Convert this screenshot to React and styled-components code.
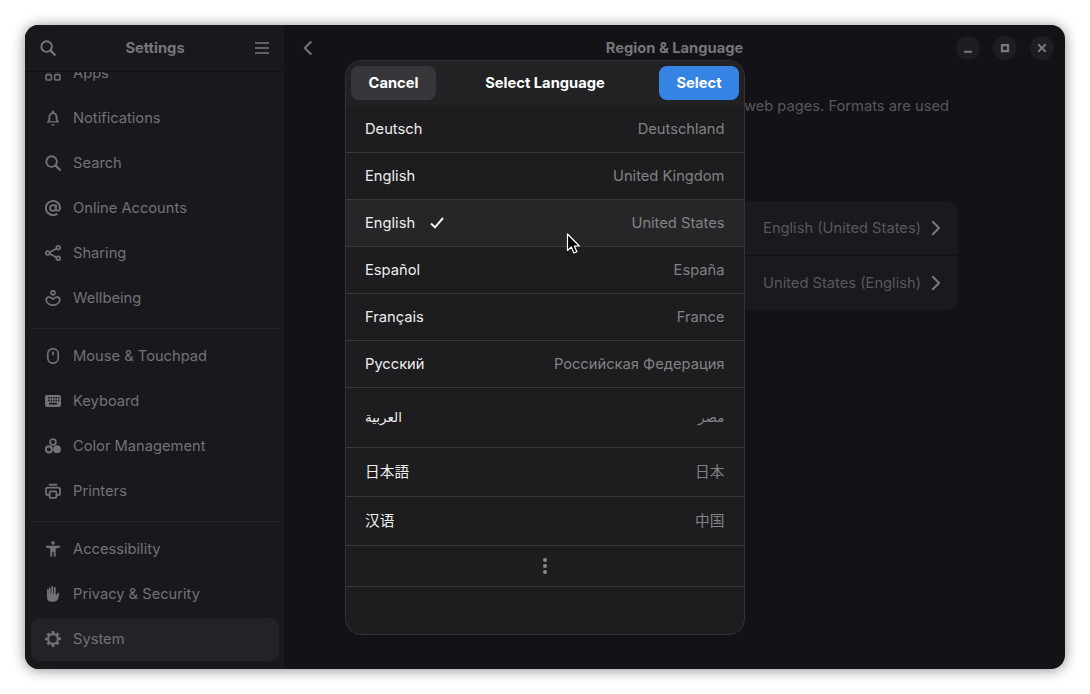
import React from "react";
import styled, { createGlobalStyle } from "styled-components";

const GlobalStyle = createGlobalStyle`
  html, body {
    margin: 0;
    padding: 0;
    background: #ffffff;
  }
  body {
    font-family: Inter, "Noto Sans CJK JP", "DejaVu Sans", sans-serif;
    font-size: 14.7px;
  }
`;

const Page = styled.div`
  width: 1090px;
  height: 694px;
  padding: 25px;
  box-sizing: border-box;
`;

const Window = styled.div`
  position: relative;
  width: 1040px;
  height: 644px;
  display: flex;
  border-radius: 14px;
  overflow: hidden;
  background: #121217;
  box-shadow: 0 1px 14px rgba(0, 0, 0, 0.45);
`;

const Sidebar = styled.aside`
  width: 259px;
  flex: none;
  display: flex;
  flex-direction: column;
  background: #19191d;
`;

const SideHeader = styled.header`
  height: 46px;
  flex: none;
  display: flex;
  align-items: center;
  justify-content: space-between;
  padding: 0 14px 0 15px;
  background: #19191d;
  border-bottom: 1px solid #111115;
  color: #78787b;
  position: relative;
  z-index: 1;
`;

const HeaderTitle = styled.div`
  font-weight: 700;
  padding-bottom: 1px;
  color: #767679;
`;

const SideList = styled.nav`
  flex: 1;
  min-height: 0;
  overflow: hidden;
  display: flex;
  flex-direction: column;
  justify-content: flex-end;
  gap: 2px;
  padding: 0 5px 8px 6px;
`;

const SideItem = styled.div`
  height: 43px;
  box-sizing: border-box;
  flex: none;
  display: flex;
  align-items: center;
  gap: 12px;
  padding: 0 14px 2px;
  border-radius: 9px;
  color: #727275;
  background: ${(p) => (p.$active ? "#232327" : "transparent")};
`;

const SideRule = styled.div`
  height: 1px;
  flex: none;
  background: #26262a;
  margin: 6px 0 4px;
`;

const Main = styled.main`
  flex: 1;
  min-width: 0;
  display: flex;
  flex-direction: column;
`;

const MainHeader = styled.header`
  height: 46px;
  flex: none;
  display: grid;
  grid-template-columns: 1fr auto 1fr;
  align-items: center;
  padding: 0 11px;
  color: #767679;
`;

const BackSlot = styled.div`
  display: flex;
  padding-left: 5px;
`;

const WindowButtons = styled.div`
  display: flex;
  justify-content: flex-end;
  gap: 13px;
`;

const RoundButton = styled.div`
  width: 24px;
  height: 24px;
  border-radius: 50%;
  background: #1e1e22;
  color: #78787b;
  display: flex;
  align-items: center;
  justify-content: center;
`;

const Content = styled.div`
  width: 567px;
  margin: 0 auto;
  padding-top: 25px;
`;

const Intro = styled.p`
  margin: 0 0 63px;
  color: #58585b;
  line-height: 21px;
`;

const Card = styled.div`
  background: #1a1a1e;
  border-radius: 12px;
`;

const CardRow = styled.div`
  height: 54px;
  display: flex;
  align-items: center;
  justify-content: flex-end;
  gap: 7px;
  padding: 0 14px;
  color: #58585b;
  & + & {
    border-top: 1px solid #121216;
  }
`;

const Dialog = styled.section`
  position: absolute;
  left: 320px;
  top: 35px;
  width: 400px;
  height: 575px;
  box-sizing: border-box;
  border: 1px solid #333336;
  border-radius: 16px;
  background: #1d1d1f;
  overflow: hidden;
  display: flex;
  flex-direction: column;
`;

const DialogHeader = styled.header`
  height: 45px;
  box-sizing: border-box;
  flex: none;
  display: grid;
  grid-template-columns: 1fr auto 1fr;
  align-items: start;
  padding: 5px 5px 0;
  background: #222225;
`;

const DialogButton = styled.button`
  height: 34px;
  width: ${(p) => p.$width}px;
  justify-self: ${(p) => (p.$primary ? "end" : "start")};
  border: none;
  border-radius: 8px;
  padding: 0 0 1px;
  font: 700 14.7px Inter, sans-serif;
  color: #ffffff;
  background: ${(p) => (p.$primary ? "#3584e4" : "#37373b")};
`;

const DialogTitle = styled.div`
  font-weight: 700;
  line-height: 34px;
  color: #ffffff;
`;

const LangRow = styled.div`
  height: ${(p) => p.$height || 47}px;
  box-sizing: border-box;
  flex: none;
  display: flex;
  align-items: center;
  justify-content: space-between;
  padding: 0 19.5px ${(p) => p.$lift || 0}px 19px;
  border-bottom: 1px solid #39393b;
  background: ${(p) => (p.$selected ? "#262628" : "transparent")};
  font-size: ${(p) => (p.$rtl ? "13.5px" : "inherit")};
`;

const LangName = styled.span`
  display: flex;
  align-items: center;
  gap: 14px;
  color: #eeeeee;
`;

const Region = styled.span`
  color: #828284;
`;

const MoreRow = styled.div`
  height: 40px;
  flex: none;
  display: flex;
  align-items: center;
  justify-content: center;
  border-bottom: 1px solid #39393b;
  color: #8a8a8c;
`;

const Pointer = styled.svg`
  position: absolute;
  left: 541px;
  top: 208px;
`;

const Icon = ({ size = 16, children, ...rest }) => (
  <svg width={size} height={size} viewBox="0 0 16 16" fill="currentColor" style={{ flex: "none" }} {...rest}>
    {children}
  </svg>
);

const SearchIcon = () => (
  <Icon>
    <circle cx="6.600" cy="6.600" r="5.300" fill="none" stroke="currentColor" strokeWidth="1.900" />
    <path d="M10.400 10.400 14.800 14.800" stroke="currentColor" strokeWidth="2.200" strokeLinecap="round" />
  </Icon>
);

const AppsIcon = () => (
  <Icon>
    <g fill="none" stroke="currentColor" strokeWidth="1.600">
      <rect x="1" y="1" width="5.400" height="5.400" rx="1.200" />
      <rect x="9.600" y="1" width="5.400" height="5.400" rx="1.200" />
      <rect x="1" y="9.600" width="5.400" height="5.400" rx="1.200" />
      <rect x="9.600" y="9.600" width="5.400" height="5.400" rx="1.200" />
    </g>
  </Icon>
);

const BellIcon = () => (
  <Icon>
    <path d="M8 .5a1.100 1.100 0 0 1 1.100 1.100v.8c2.100.5 3.400 2.300 3.400 4.500v3.100l1.400 1.500v1H2.100v-1l1.400-1.500V6.900c0-2.200 1.300-4 3.400-4.500v-.8A1.100 1.100 0 0 1 8 .5Zm0 3.500C6.400 4 5.300 5.300 5.300 6.900v3.600l-.6.800h6.600l-.6-.8V6.900C10.700 5.300 9.600 4 8 4Z" />
    <path d="M6.400 14.200h3.200a1.600 1.600 0 0 1-3.200 0Z" />
  </Icon>
);

const AtIcon = () => (
  <Icon>
    <g fill="none" stroke="currentColor" strokeWidth="1.900">
      <circle cx="8" cy="8" r="2.900" />
      <path d="M10.900 5.100v3.900c0 2.400 4.200 2.300 4.200-1A7.100 7.100 0 1 0 11.700 14.100" strokeLinecap="round" />
    </g>
  </Icon>
);

const ShareIcon = () => (
  <Icon>
    <path d="M3.500 8 12.500 3M3.500 8l9 5" stroke="currentColor" strokeWidth="1.700" fill="none" />
    <circle cx="2.800" cy="8" r="1.900" fill="#19191d" stroke="currentColor" strokeWidth="1.700" />
    <circle cx="13.200" cy="2.800" r="1.900" fill="#19191d" stroke="currentColor" strokeWidth="1.700" />
    <circle cx="13.200" cy="13.200" r="1.900" fill="#19191d" stroke="currentColor" strokeWidth="1.700" />
  </Icon>
);

const WellbeingIcon = () => (
  <Icon>
    <circle cx="8" cy="2.800" r="2" fill="none" stroke="currentColor" strokeWidth="1.700" />
    <path
      d="M8 9.400C6.800 7.600 5.200 7 3.600 7.200 2 7.400 1.100 8.800 1.200 10.200c.1 2.600 3.400 4.900 6.800 5 3.400-.1 6.700-2.400 6.800-5 .1-1.400-.8-2.800-2.400-3-1.600-.2-3.200.4-4.400 2.200Z"
      fill="none"
      stroke="currentColor"
      strokeWidth="1.700"
      strokeLinejoin="round"
    />
  </Icon>
);

const MouseIcon = () => (
  <Icon>
    <rect x="2.800" y="0.900" width="10.400" height="14.200" rx="4.800" fill="none" stroke="currentColor" strokeWidth="1.700" />
    <rect x="7.100" y="3.500" width="1.800" height="4" rx="0.900" />
  </Icon>
);

const KeyboardIcon = () => (
  <Icon>
    <path
      fillRule="evenodd"
      d="M2 2h12a2 2 0 0 1 2 2v8a2 2 0 0 1-2 2H2a2 2 0 0 1-2-2V4a2 2 0 0 1 2-2Zm1 2v1.500h1.500V4Zm2.500 0v1.500H7V4ZM8 4v1.500h1.500V4Zm2.500 0v1.500H12V4ZM13 4v1.500h1.300V4ZM3 6.700v1.500h1.500V6.700Zm2.500 0v1.500H7V6.700Zm2.500 0v1.500h1.500V6.700Zm2.500 0v1.500H12V6.700Zm2.500 0v1.500h1.300V6.700ZM4 9.800v1.700h8V9.800Z"
    />
  </Icon>
);

const ColorIcon = () => (
  <Icon>
    <circle cx="8" cy="4" r="2.900" fill="none" stroke="currentColor" strokeWidth="1.700" />
    <circle cx="3.800" cy="11.400" r="3" fill="none" stroke="currentColor" strokeWidth="2.200" />
    <circle cx="12" cy="11.200" r="3.900" />
  </Icon>
);

const PrinterIcon = () => (
  <Icon>
    <path d="M3.800 .8h8.400v1.800H3.800Z" />
    <path
      d="M3.800 12H2.600c-.9 0-1.600-.7-1.600-1.600V6.400c0-1 .8-1.800 1.800-1.800h10.400c1 0 1.800.8 1.800 1.800v4c0 .9-.7 1.600-1.600 1.600h-1.200"
      fill="none"
      stroke="currentColor"
      strokeWidth="1.800"
    />
    <rect x="4.600" y="8.400" width="6.800" height="6.400" rx="1" fill="none" stroke="currentColor" strokeWidth="1.800" />
  </Icon>
);

const AccessibilityIcon = () => (
  <Icon>
    <circle cx="8" cy="1.900" r="1.800" />
    <path d="M1 4.800h14v1.800l-4.300.8V15.500H8.800v-4.700H7.200v4.700H5.300V7.400L1 6.600Z" />
  </Icon>
);

const HandIcon = () => (
  <Icon>
    <path d="M4.800 1.600c.5 0 .9.400.9.900v5h.7V1c0-.5.400-.9.900-.9s.9.400.9.900v6.500h.7V1.800c0-.5.400-.9.900-.9s.9.400.9.900v7l.7.300 1.300-2c.3-.4.800-.6 1.200-.3.400.2.500.7.300 1.100L13 13c-.9 1.700-2.400 2.800-4.500 2.800H6.200C3.600 15.800 2 14.200 2 11.600V3.800c0-.5.400-.9.900-.9s.9.400.9.900v3.700h.1V2.500c0-.5.400-.9.900-.9Z" />
  </Icon>
);

const GearIcon = () => (
  <Icon>
    <path
      fillRule="evenodd"
      d="M6.800 0h2.400l.4 2.200 1.200.5 1.900-1.300 1.700 1.700-1.300 1.900.5 1.200 2.400.4v2.400l-2.400.4-.5 1.200 1.300 1.900-1.700 1.700-1.900-1.300-1.200.5-.4 2.500H6.800l-.4-2.500-1.200-.5-1.900 1.300-1.700-1.700 1.300-1.900-.5-1.200L0 9.200V6.800l2.400-.4.500-1.200L1.600 3.300l1.700-1.700 1.900 1.300 1.200-.5ZM8 4.200a3.800 3.800 0 1 0 0 7.600 3.800 3.800 0 0 0 0-7.600Z"
    />
  </Icon>
);

const MenuIcon = () => (
  <Icon>
    <path d="M1 2.200h14v1.600H1ZM1 7.200h14v1.600H1ZM1 12.200h14v1.600H1Z" />
  </Icon>
);

const BackIcon = () => (
  <Icon>
    <path d="M10.800 2 4.800 8l6 6" fill="none" stroke="currentColor" strokeWidth="1.900" strokeLinecap="round" strokeLinejoin="round" />
  </Icon>
);

const ChevronIcon = () => (
  <Icon>
    <path d="M4.800 1.800 11 8l-6.200 6.200" fill="none" stroke="#7a7a7d" strokeWidth="2" strokeLinecap="round" strokeLinejoin="round" />
  </Icon>
);

const CheckIcon = () => (
  <Icon>
    <path d="M2 8.500 6 12.300 14 3" fill="none" stroke="#f2f2f2" strokeWidth="2" />
  </Icon>
);

const firstGroup = [
  ["Apps", AppsIcon],
  ["Notifications", BellIcon],
  ["Search", SearchIcon],
  ["Online Accounts", AtIcon],
  ["Sharing", ShareIcon],
  ["Wellbeing", WellbeingIcon],
];

const secondGroup = [
  ["Mouse & Touchpad", MouseIcon],
  ["Keyboard", KeyboardIcon],
  ["Color Management", ColorIcon],
  ["Printers", PrinterIcon],
];

const thirdGroup = [
  ["Accessibility", AccessibilityIcon],
  ["Privacy & Security", HandIcon],
  ["System", GearIcon],
];

const languages = [
  { name: "Deutsch", region: "Deutschland" },
  { name: "English", region: "United Kingdom" },
  { name: "English", region: "United States", selected: true },
  { name: "Español", region: "España" },
  { name: "Français", region: "France" },
  { name: "Русский", region: "Российская Федерация" },
  { name: "العربية", region: "مصر", height: 60, lift: 2, rtl: true },
  { name: "日本語", region: "日本", height: 49, lift: 4 },
  { name: "汉语", region: "中国", height: 49, lift: 4 },
];

const renderItems = (items) =>
  items.map(([label, ItemIcon]) => (
    <SideItem key={label} $active={label === "System"}>
      <ItemIcon />
      {label}
    </SideItem>
  ));

export default function App() {
  return (
    <Page>
      <GlobalStyle />
      <Window>
        <Sidebar>
          <SideHeader>
            <SearchIcon />
            <HeaderTitle>Settings</HeaderTitle>
            <MenuIcon />
          </SideHeader>
          <SideList>
            {renderItems(firstGroup)}
            <SideRule />
            {renderItems(secondGroup)}
            <SideRule />
            {renderItems(thirdGroup)}
          </SideList>
        </Sidebar>
        <Main>
          <MainHeader>
            <BackSlot>
              <BackIcon />
            </BackSlot>
            <HeaderTitle>Region &amp; Language</HeaderTitle>
            <WindowButtons>
              <RoundButton>
                <Icon size={12}>
                  <path d="M2.500 11.500h11v2.700h-11Z" />
                </Icon>
              </RoundButton>
              <RoundButton>
                <Icon size={12}>
                  <path fillRule="evenodd" d="M2.500 2.500h11v11h-11Zm3 3v5h5v-5Z" />
                </Icon>
              </RoundButton>
              <RoundButton>
                <Icon size={12}>
                  <path d="M3 3l10 10M13 3 3 13" stroke="currentColor" strokeWidth="2.800" />
                </Icon>
              </RoundButton>
            </WindowButtons>
          </MainHeader>
          <Content>
            <Intro>
              The language setting is used for interface text and web pages. Formats are used for numbers, dates and
              currencies.
            </Intro>
            <Card>
              <CardRow>
                English (United States)
                <ChevronIcon />
              </CardRow>
              <CardRow>
                United States (English)
                <ChevronIcon />
              </CardRow>
            </Card>
          </Content>
        </Main>
        <Dialog>
          <DialogHeader>
            <DialogButton $width={85}>Cancel</DialogButton>
            <DialogTitle>Select Language</DialogTitle>
            <DialogButton $width={80} $primary>
              Select
            </DialogButton>
          </DialogHeader>
          {languages.map((lang) => (
            <LangRow key={lang.region} $height={lang.height} $lift={lang.lift} $selected={lang.selected} $rtl={lang.rtl}>
              <LangName>
                {lang.name}
                {lang.selected && <CheckIcon />}
              </LangName>
              <Region>{lang.region}</Region>
            </LangRow>
          ))}
          <MoreRow>
            <Icon>
              <circle cx="8" cy="2" r="2" />
              <circle cx="8" cy="8" r="2" />
              <circle cx="8" cy="14" r="2" />
            </Icon>
          </MoreRow>
        </Dialog>
        <Pointer width="15" height="22" viewBox="0 0 15 22">
          <path
            d="M1.500 1v16.500l3.800-3.500 2.600 6 3-1.300-2.600-5.700h5Z"
            fill="#000000"
            stroke="#ffffff"
            strokeWidth="1.200"
            strokeLinejoin="round"
          />
        </Pointer>
      </Window>
    </Page>
  );
}
